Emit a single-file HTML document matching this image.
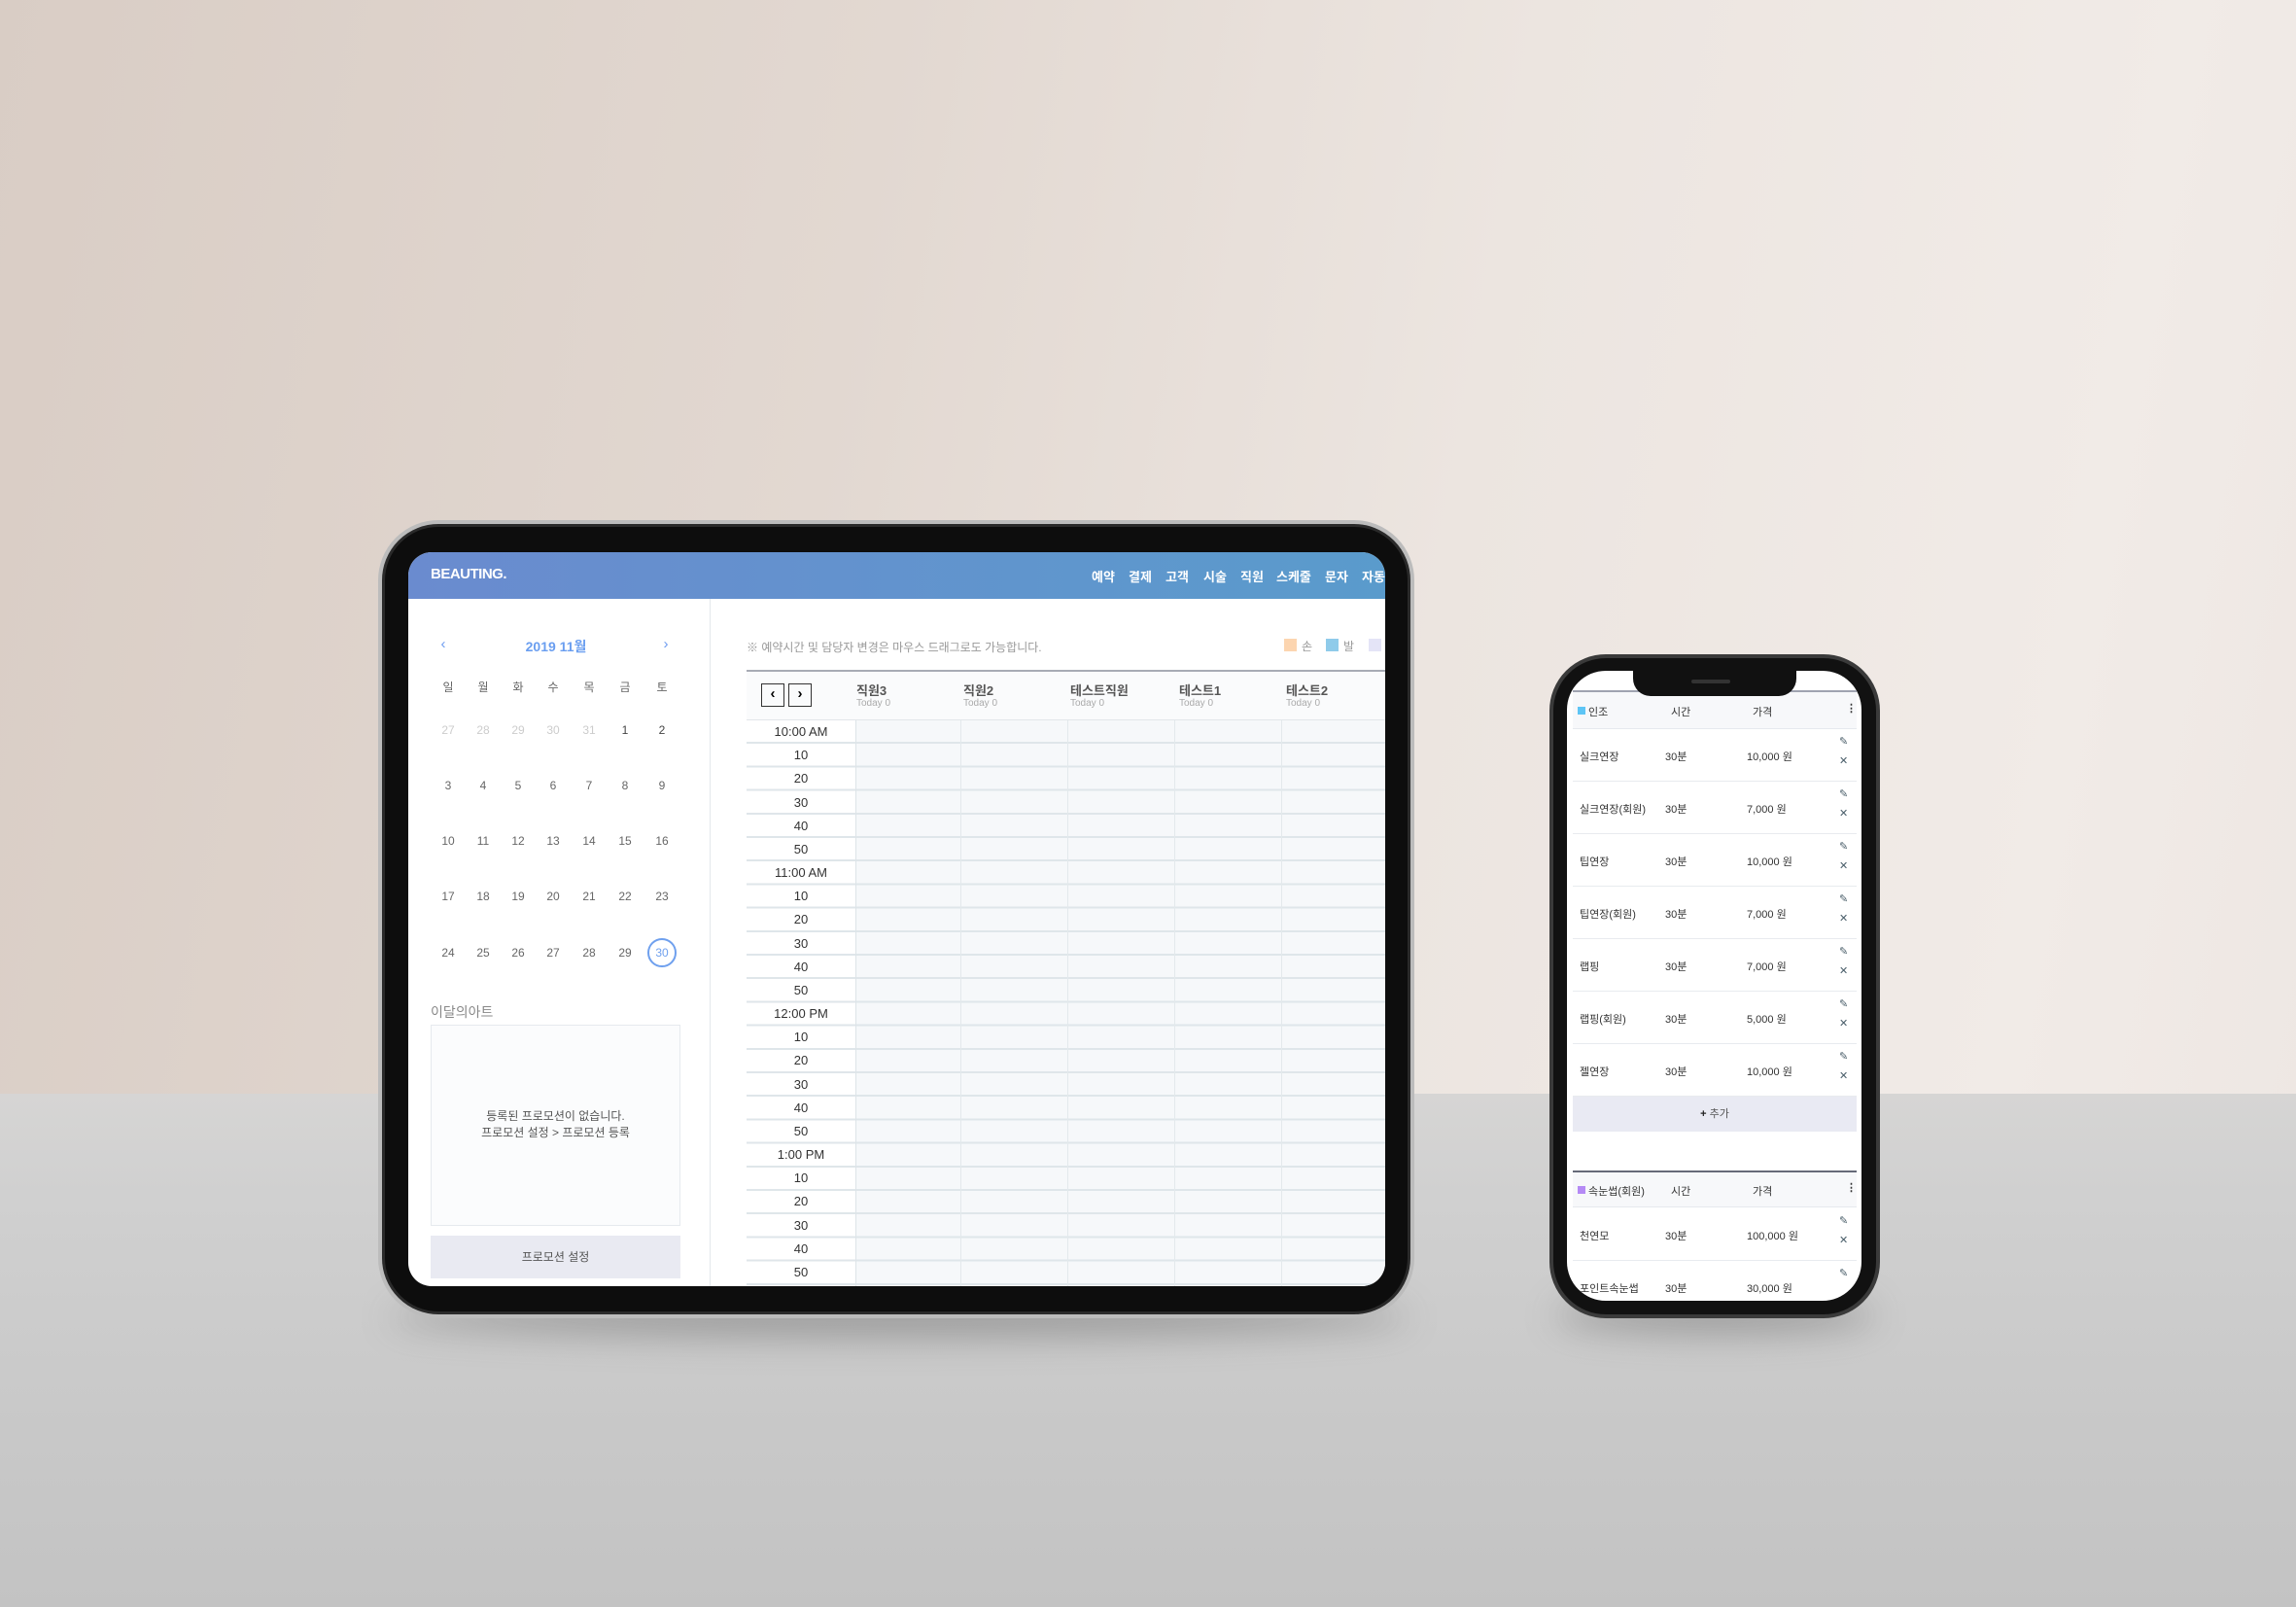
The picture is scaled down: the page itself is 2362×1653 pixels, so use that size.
<!DOCTYPE html>
<html><head><meta charset="utf-8">
<style>
*{margin:0;padding:0;box-sizing:border-box}
body{width:2362px;height:1653px;overflow:hidden;position:relative;font-family:"Liberation Sans","Noto Sans CJK KR",sans-serif;
background:linear-gradient(100deg,#d9cdc5 0%,#e2d8d1 35%,#ece5e0 60%,#f1ebe7 85%,#ede6e2 100%);}
.a{position:absolute}
.floor{left:0;top:1125px;width:2362px;height:528px;background:linear-gradient(180deg,#d6d5d4 0%,#d0d0d0 20%,#c9c9c9 60%,#c3c3c3 100%)}
.shadow{border-radius:50%;background:rgba(60,60,60,.35);filter:blur(18px)}
.tab{left:389px;top:535px;width:1066px;height:821px;border-radius:62px;background:#0d0d0d;border:4px solid #bcbcbc;box-shadow:inset 0 0 0 3px #2a2a2a}
.scr{left:420px;top:568px;width:1005px;height:755px;border-radius:24px;background:#fff;overflow:hidden}
.hdr{left:0;top:0;width:1005px;height:48px;background:linear-gradient(90deg,#6a8bcf,#5a9bcc)}
.hdr span{position:absolute;top:15px;color:#fff;font-size:13px;font-weight:bold;white-space:nowrap}
.t{position:absolute;white-space:nowrap}
.cal span{position:absolute;font-size:12px;color:#666;transform:translateX(-50%);white-space:nowrap}
.tl{position:absolute;left:348px;width:112px;text-align:center;font-size:13px;color:#333}
.ph{left:1594px;top:673px;width:340px;height:683px;border-radius:58px;background:#111;border:4px solid #3a3a3a}
.pscr{left:1612px;top:690px;width:303px;height:648px;border-radius:40px;background:#fff;overflow:hidden}
.pr{position:absolute;left:6px;width:292px;height:54px;border-bottom:1px solid #e8ebef;font-size:11px;color:#333}
.pr span{position:absolute;top:20px}
.ic{position:absolute;left:274px;color:#4a5e6a;font-size:11px}
</style></head><body>
<div class="a floor"></div>
<div class="a shadow" style="left:400px;top:1335px;width:1050px;height:40px"></div>
<div class="a shadow" style="left:1600px;top:1335px;width:330px;height:36px"></div>

<div class="a tab"></div>
<div class="a scr">
 <div class="a hdr">
  <span style="left:23px;font-size:15px;letter-spacing:-0.5px;top:14px">BEAUTING.</span>
  <span style="left:703px">예약</span><span style="left:741px">결제</span><span style="left:779px">고객</span><span style="left:818px">시술</span><span style="left:856px">직원</span><span style="left:893px">스케줄</span><span style="left:943px">문자</span><span style="left:981px">자동</span>
 </div>
 <div class="a" style="left:310px;top:48px;width:1px;height:707px;background:#e4e8ec"></div>
 <div class="cal">
  <span style="left:36px;top:86px;color:#6d9cf0;font-size:15px">‹</span>
  <span style="left:152px;top:87px;color:#6a9ef0;font-size:14px;font-weight:bold">2019 11월</span>
  <span style="left:265px;top:86px;color:#6d9cf0;font-size:15px">›</span>
  <span style="left:41px;top:130px">일</span><span style="left:77px;top:130px">월</span><span style="left:113px;top:130px">화</span><span style="left:149px;top:130px">수</span><span style="left:186px;top:130px">목</span><span style="left:223px;top:130px">금</span><span style="left:261px;top:130px">토</span>
  <span style="left:41px;top:176px;color:#ccc">27</span><span style="left:77px;top:176px;color:#ccc">28</span><span style="left:113px;top:176px;color:#ccc">29</span><span style="left:149px;top:176px;color:#ccc">30</span><span style="left:186px;top:176px;color:#ccc">31</span><span style="left:223px;top:176px;color:#444">1</span><span style="left:261px;top:176px;color:#444">2</span>
  <span style="left:41px;top:233px">3</span><span style="left:77px;top:233px">4</span><span style="left:113px;top:233px">5</span><span style="left:149px;top:233px">6</span><span style="left:186px;top:233px">7</span><span style="left:223px;top:233px">8</span><span style="left:261px;top:233px">9</span>
  <span style="left:41px;top:290px">10</span><span style="left:77px;top:290px">11</span><span style="left:113px;top:290px">12</span><span style="left:149px;top:290px">13</span><span style="left:186px;top:290px">14</span><span style="left:223px;top:290px">15</span><span style="left:261px;top:290px">16</span>
  <span style="left:41px;top:347px">17</span><span style="left:77px;top:347px">18</span><span style="left:113px;top:347px">19</span><span style="left:149px;top:347px">20</span><span style="left:186px;top:347px">21</span><span style="left:223px;top:347px">22</span><span style="left:261px;top:347px">23</span>
  <span style="left:41px;top:405px">24</span><span style="left:77px;top:405px">25</span><span style="left:113px;top:405px">26</span><span style="left:149px;top:405px">27</span><span style="left:186px;top:405px">28</span><span style="left:223px;top:405px">29</span>
  <span style="left:261px;top:397px;width:30px;height:30px;border:2px solid #6fa0ee;border-radius:50%;text-align:center;line-height:26px;color:#6fa0ee">30</span>
 </div>
 <div class="t" style="left:23px;top:463px;font-size:14px;color:#888">이달의아트</div>
 <div class="a" style="left:23px;top:486px;width:257px;height:207px;border:1px solid #e6eaee;background:#fbfcfd"></div>
 <div class="t" style="left:23px;top:572px;width:257px;text-align:center;font-size:12px;color:#555;line-height:17px;white-space:normal">등록된 프로모션이 없습니다.<br>프로모션 설정 &gt; 프로모션 등록</div>
 <div class="a" style="left:23px;top:703px;width:257px;height:44px;background:#e9eaf2;text-align:center;line-height:44px;font-size:12px;color:#555">프로모션 설정</div>
 <div class="t" style="left:348px;top:89px;font-size:12px;color:#999">※ 예약시간 및 담당자 변경은 마우스 드래그로도 가능합니다.</div>
 <div class="a" style="left:901px;top:89px;width:13px;height:13px;background:#fcd5b0"></div><div class="t" style="left:919px;top:88px;font-size:12px;color:#999">손</div>
 <div class="a" style="left:944px;top:89px;width:13px;height:13px;background:#8fcbea"></div><div class="t" style="left:962px;top:88px;font-size:12px;color:#999">발</div>
 <div class="a" style="left:988px;top:89px;width:13px;height:13px;background:#e4e4f7"></div>
 <div class="a" style="left:348px;top:121px;width:657px;height:52px;background:#fafbfc;border-top:2px solid #a8abb5;border-bottom:1px solid #e2e6ea"></div>
 <div class="a" style="left:363px;top:135px;width:24px;height:24px;border:1.5px solid #333;text-align:center;line-height:20px;font-size:15px;font-weight:bold">‹</div>
 <div class="a" style="left:391px;top:135px;width:24px;height:24px;border:1.5px solid #333;text-align:center;line-height:20px;font-size:15px;font-weight:bold">›</div>
 <div class="t" style="left:461px;top:132px;font-size:13px;font-weight:bold;color:#555">직원3</div><div class="t" style="left:461px;top:150px;font-size:10px;color:#aaa">Today 0</div>
 <div class="t" style="left:571px;top:132px;font-size:13px;font-weight:bold;color:#555">직원2</div><div class="t" style="left:571px;top:150px;font-size:10px;color:#aaa">Today 0</div>
 <div class="t" style="left:681px;top:132px;font-size:13px;font-weight:bold;color:#555">테스트직원</div><div class="t" style="left:681px;top:150px;font-size:10px;color:#aaa">Today 0</div>
 <div class="t" style="left:793px;top:132px;font-size:13px;font-weight:bold;color:#555">테스트1</div><div class="t" style="left:793px;top:150px;font-size:10px;color:#aaa">Today 0</div>
 <div class="t" style="left:903px;top:132px;font-size:13px;font-weight:bold;color:#555">테스트2</div><div class="t" style="left:903px;top:150px;font-size:10px;color:#aaa">Today 0</div>
 <div class="a" style="left:348px;top:173px;width:657px;height:582px;background:repeating-linear-gradient(180deg,transparent 0,transparent 22.2px,#dfe6ea 22.2px,#dfe6ea 24.2px)"></div>
 <div class="a" style="left:460px;top:173px;width:545px;height:582px;background:repeating-linear-gradient(180deg,#f6f8fa 0,#f6f8fa 22.2px,#dfe6ea 22.2px,#dfe6ea 24.2px)"></div>
 <div class="a" style="left:460px;top:173px;width:1px;height:582px;background:#dde4e8"></div>
 <div class="a" style="left:568px;top:173px;width:1px;height:582px;background:#e3e9ec"></div>
 <div class="a" style="left:678px;top:173px;width:1px;height:582px;background:#e3e9ec"></div>
 <div class="a" style="left:788px;top:173px;width:1px;height:582px;background:#e3e9ec"></div>
 <div class="a" style="left:898px;top:173px;width:1px;height:582px;background:#e3e9ec"></div>
 <div class="tl" style="top:177px">10:00 AM</div><div class="tl" style="top:201px">10</div><div class="tl" style="top:225px">20</div><div class="tl" style="top:250px">30</div><div class="tl" style="top:274px">40</div><div class="tl" style="top:298px">50</div>
 <div class="tl" style="top:322px">11:00 AM</div><div class="tl" style="top:346px">10</div><div class="tl" style="top:370px">20</div><div class="tl" style="top:395px">30</div><div class="tl" style="top:419px">40</div><div class="tl" style="top:443px">50</div>
 <div class="tl" style="top:467px">12:00 PM</div><div class="tl" style="top:491px">10</div><div class="tl" style="top:515px">20</div><div class="tl" style="top:540px">30</div><div class="tl" style="top:564px">40</div><div class="tl" style="top:588px">50</div>
 <div class="tl" style="top:612px">1:00 PM</div><div class="tl" style="top:636px">10</div><div class="tl" style="top:660px">20</div><div class="tl" style="top:685px">30</div><div class="tl" style="top:709px">40</div><div class="tl" style="top:733px">50</div>
</div>

<div class="a ph"></div>
<div class="a pscr">
 <div class="a" style="left:6px;top:20px;width:292px;height:40px;background:#f7f8fa;border-top:2px solid #9fa3b0;border-bottom:1px solid #e6e9ee;font-size:11px;color:#333">
  <div class="a" style="left:5px;top:15px;width:8px;height:8px;background:#5ec5f5"></div>
  <span class="a" style="left:16px;top:12px">인조</span><span class="a" style="left:101px;top:12px">시간</span><span class="a" style="left:185px;top:12px">가격</span><span class="a" style="left:281px;top:10px;font-weight:bold">⋮</span>
 </div>
 <div class="pr" style="top:60px"><span style="left:7px">실크연장</span><span style="left:95px">30분</span><span style="left:179px">10,000 원</span><span class="ic" style="top:6px">✎</span><span class="ic" style="top:26px">✕</span></div>
 <div class="pr" style="top:114px"><span style="left:7px">실크연장(회원)</span><span style="left:95px">30분</span><span style="left:179px">7,000 원</span><span class="ic" style="top:6px">✎</span><span class="ic" style="top:26px">✕</span></div>
 <div class="pr" style="top:168px"><span style="left:7px">팁연장</span><span style="left:95px">30분</span><span style="left:179px">10,000 원</span><span class="ic" style="top:6px">✎</span><span class="ic" style="top:26px">✕</span></div>
 <div class="pr" style="top:222px"><span style="left:7px">팁연장(회원)</span><span style="left:95px">30분</span><span style="left:179px">7,000 원</span><span class="ic" style="top:6px">✎</span><span class="ic" style="top:26px">✕</span></div>
 <div class="pr" style="top:276px"><span style="left:7px">랩핑</span><span style="left:95px">30분</span><span style="left:179px">7,000 원</span><span class="ic" style="top:6px">✎</span><span class="ic" style="top:26px">✕</span></div>
 <div class="pr" style="top:330px"><span style="left:7px">랩핑(회원)</span><span style="left:95px">30분</span><span style="left:179px">5,000 원</span><span class="ic" style="top:6px">✎</span><span class="ic" style="top:26px">✕</span></div>
 <div class="pr" style="top:384px"><span style="left:7px">젤연장</span><span style="left:95px">30분</span><span style="left:179px">10,000 원</span><span class="ic" style="top:6px">✎</span><span class="ic" style="top:26px">✕</span></div>
 <div class="a" style="left:6px;top:438px;width:292px;height:36px;background:#e9eaf3;text-align:center;line-height:36px;font-size:11px;color:#555"><b style="color:#222">+</b> 추가</div>
 <div class="a" style="left:6px;top:514px;width:292px;height:38px;background:#f7f8fa;border-top:2px solid #666a78;border-bottom:1px solid #e6e9ee;font-size:11px;color:#333">
  <div class="a" style="left:5px;top:14px;width:8px;height:8px;background:#b58af5"></div>
  <span class="a" style="left:16px;top:11px">속눈썹(회원)</span><span class="a" style="left:101px;top:11px">시간</span><span class="a" style="left:185px;top:11px">가격</span><span class="a" style="left:281px;top:9px;font-weight:bold">⋮</span>
 </div>
 <div class="pr" style="top:553px"><span style="left:7px">천연모</span><span style="left:95px">30분</span><span style="left:179px">100,000 원</span><span class="ic" style="top:6px">✎</span><span class="ic" style="top:26px">✕</span></div>
 <div class="pr" style="top:607px"><span style="left:7px">포인트속눈썹</span><span style="left:95px">30분</span><span style="left:179px">30,000 원</span><span class="ic" style="top:6px">✎</span></div>
 <div class="a" style="left:68px;top:0;width:168px;height:26px;background:#111;border-radius:0 0 18px 18px"></div>
 <div class="a" style="left:128px;top:9px;width:40px;height:4px;background:#333;border-radius:2px"></div>
</div>
</body></html>
